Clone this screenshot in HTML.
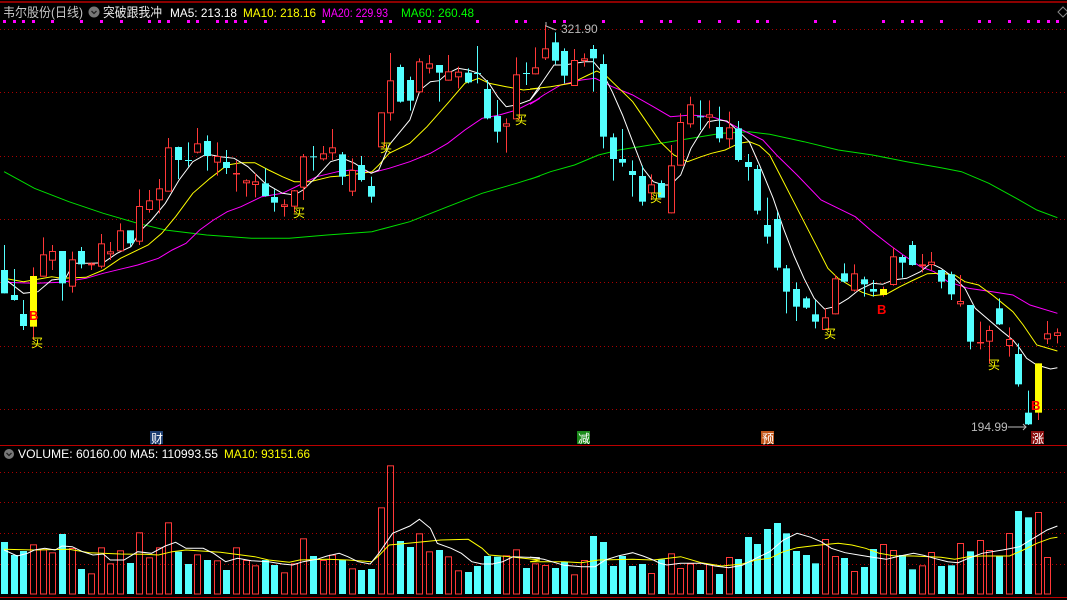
<!DOCTYPE html>
<html><head><meta charset="utf-8"><style>
html,body{margin:0;padding:0;background:#000;width:1067px;height:600px;overflow:hidden}
svg{display:block}
text{font-family:"Liberation Sans","Noto Sans CJK SC",sans-serif}
</style></head><body>
<svg id="s" width="1067" height="600" xmlns="http://www.w3.org/2000/svg">
<rect width="1067" height="600" fill="#000"/>
<line x1="0" y1="2" x2="1067" y2="2" stroke="#b00" stroke-width="1.5"/>
<g id="grid"></g>
<g id="lines"></g>
<g id="cand"></g>
<g id="vol"></g>
<line x1="0" y1="445.5" x2="1067" y2="445.5" stroke="#b00" stroke-width="1"/>
<line x1="0" y1="597.5" x2="1067" y2="597.5" stroke="#b00" stroke-width="1"/>
<text x="3" y="17" font-size="13" fill="#c8c8c8" textLength="80" lengthAdjust="spacingAndGlyphs">韦尔股份(日线)</text>
<circle cx="94" cy="12" r="5.5" fill="#777"/><path d="M91.5 11l2.5 2.5 2.5-2.5" stroke="#222" fill="none" stroke-width="1.3"/>
<text x="103" y="17" font-size="13" fill="#e8e8e8" textLength="59" lengthAdjust="spacingAndGlyphs">突破跟我冲</text>
<text x="170" y="17" font-size="12" fill="#fff" textLength="67" lengthAdjust="spacingAndGlyphs">MA5: 213.18</text>
<text x="243" y="17" font-size="12" fill="#ff0" textLength="73" lengthAdjust="spacingAndGlyphs">MA10: 218.16</text>
<text x="322" y="17" font-size="12" fill="#f0f" textLength="66" lengthAdjust="spacingAndGlyphs">MA20: 229.93</text>
<text x="401" y="17" font-size="12" fill="#0f0" textLength="73" lengthAdjust="spacingAndGlyphs">MA60: 260.48</text>
<path d="M1063 7l5 5-5 5-5-5z" fill="none" stroke="#888"/>
<circle cx="9" cy="454" r="5" fill="#777"/><path d="M6.5 453l2.5 2.5 2.5-2.5" stroke="#222" fill="none" stroke-width="1.3"/>
<text x="18" y="458" font-size="12" fill="#fff" textLength="200" lengthAdjust="spacingAndGlyphs">VOLUME: 60160.00  MA5: 110993.55</text>
<text x="224" y="458" font-size="12" fill="#ff0" textLength="86" lengthAdjust="spacingAndGlyphs">MA10: 93151.66</text>
<text x="561" y="33" font-size="12" fill="#bbb">321.90</text>
<path d="M546 22v4l10 4" stroke="#bbb" fill="none"/>
<text x="971" y="431" font-size="12" fill="#bbb">194.99</text>
<path d="M1008 427h18m-3-3l3 3-3 3" stroke="#bbb" fill="none"/>
<rect x="150" y="431" width="13" height="13" fill="#1c3d70"/><text x="151" y="443" font-size="12" fill="#fff">财</text>
<rect x="577" y="431" width="13" height="13" fill="#1a8a1a"/><text x="578" y="443" font-size="12" fill="#fff">减</text>
<rect x="761" y="431" width="13" height="13" fill="#c0561a"/><text x="762" y="443" font-size="12" fill="#fff">预</text>
<rect x="1031" y="431" width="13" height="13" fill="#8a1010"/><text x="1032" y="443" font-size="12" fill="#fff">涨</text>
<g id="lab"></g>
</svg>
<script>
var NS="http://www.w3.org/2000/svg";
function el(p,t,a){var e=document.createElementNS(NS,t);for(var k in a)e.setAttribute(k,a[k]);document.getElementById(p).appendChild(e);return e;}
[29,92,156,219,282,346,409,472,502,533,564].forEach(function(y){el("grid","line",{x1:0,x2:1067,y1:y+.5,y2:y+.5,stroke:"#a00","stroke-dasharray":"1 3"});});
[4,14,23,33,52,81,101,121,149,159,168,188,197,217,226,235,245,265,323,361,381,390,419,429,439,477,516,525,554,564,603,641,661,670,699,719,738,757,767,815,834,883,902,912,921,941,979,989,1009,1028,1038,1048,1057].forEach(function(x){el("grid","rect",{x:x-1,y:20,width:3,height:3,fill:"#f0f"});});
var X=function(i){return 4+9.66*i;};
var A=[["d",720,790,645,790],["d",795,810,717,812],["d",852,888,810,900],["B",738,890,712,930],["u",673,740,622,740],["u",663,692,645,720],["d",663,760,663,812],["u",688,770,665,788],["d",663,703,651,715],["u",700,706,697,720],["u",640,710,612,715],["u",664,673,636,690],["u",601,664,580,664],["d",601,640,601,650],["u",528,635,478,645],["u",511,540,480,548],["u",475,511,447,550],["u",352,485,324,485],["d",351,390,350,447],["d",390,392,337,410],["u",340,368,294,370],["d",333,378,316,422],["u",378,398,337,437],["d",396,414,360,432],["u",429,431,392,485],["u",451,460,448,500],["u",454,465,430,502],["d",460,498,415,500],["d",501,518,478,545],["u",523,531,508,560],["u",481,530,480,548],["u",379,473,372,510],["d",379,381,348,422],["u",370,388,348,392],["u",352,370,297,390],["d",373,440,366,465],["u",420,485,385,498],["d",405,450,378,455],["d",468,500,440,518],["u",247,352,247,352],["u",151,250,69,272],["d",111,215,104,218],["d",150,212,140,242],["u",94,187,85,187],["u",100,116,75,130],["d",105,128,105,215],["u",124,152,75,152],["u",125,142,110,175],["d",128,157,115,160],["d",129,131,48,160],["d",177,265,150,268],["d",258,305,210,338],["u",280,290,265,368],["u",133,268,82,268],["d",129,131,97,165],["u",112,133,52,133]];
var B=[["u",100,130,30,135],["d",82,137,52,148],["d",108,182,100,205],["u",135,213,102,213],["u",130,138,115,155],["d",102,130,90,230],["d",147,365,118,400],["d",367,432,355,497],["d",432,443,342,455],["d",468,480,436,545],["d",483,560,452,572],["u",508,535,478,555],["d",504,548,496,548],["u",451,595,390,595],["u",321,452,295,452],["u",268,328,245,338],["d",304,306,256,345],["u",298,308,256,340],["d",336,370,275,382],["u",337,373,290,398],["d",340,435,318,440],["d",441,456,417,497],["d",462,587,450,598],["d",630,665,548,686],["d",612,758,590,766],["d",760,830,750,895],["d",822,875,802,918],["d",850,878,845,882],["d",898,920,855,940],["u",907,945,880,945],["u",790,898,780,898],["d",775,800,745,803],["u",775,827,748,830],["d",793,808,785,845],["d",822,830,795,845],["Y",822,840,815,845],["u",724,810,698,812],["d",726,743,720,788],["d",690,750,678,752],["u",748,754,717,772],["u",740,750,711,765],["d",765,800,765,820],["d",778,838,770,855],["u",858,868,780,875],["d",870,980,870,1003],["u",981,983,920,1003],["u",945,980,932,1045],["d",880,928,850,930],["u",972,993,937,1025],["d",1017,1108,985,1115],["d",1193,1228,1127,1230],["B",1045,1193,1045,1215],["u",955,973,918,987],["u",952,963,940,985]];
var C=A.map(function(c){return [c[0],30+c[1]/3,30+c[2]/3,30+c[3]/3,30+c[4]/3];}).concat(B.map(function(c){return [c[0],15+c[1]/3,15+c[2]/3,15+c[3]/3,15+c[4]/3];}));
C.forEach(function(c,i){var x=Math.round(X(i));var col=c[0]=="d"?"#54ffff":"#ff3838";
 if(c[0]=="B"||c[0]=="Y"){el("cand","line",{x1:x+.5,x2:x+.5,y1:c[3],y2:c[4],stroke:"#ff3838"});el("cand","rect",{x:x-3,y:c[1],width:7,height:c[2]-c[1],fill:"#ff0"});return;}
 el("cand","line",{x1:x+.5,x2:x+.5,y1:c[3],y2:c[4],stroke:col});
 var h=Math.max(1,c[2]-c[1]);
 if(c[0]=="d")el("cand","rect",{x:x-3,y:c[1],width:7,height:h,fill:col});
 else {el("cand","rect",{x:x-2.5,y:c[1]+.5,width:6,height:Math.max(0.5,h-1),fill:"#000",stroke:col});}
});
function pts(a,z){var o=[];for(var i=0;i<a.length;i+=2){o.push(z?((530+a[i]/2.92).toFixed(1)+","+(15+a[i+1]/3).toFixed(1)):((a[i]/2.904).toFixed(1)+","+(30+a[i+1]/3).toFixed(1)));}return o.join(" ");}
function line(a,b,col){el("lines","polyline",{points:pts(a,0)+" "+pts(b,1),fill:"none",stroke:col,"stroke-width":1});}
line([12,425,100,475,200,515,300,550,400,580,480,600,600,615,730,625,840,625,950,615,1080,605,1190,575,1300,530,1400,490,1500,460,1568,438],[0,493,60,470,130,450,200,420,260,405,320,395,400,382,480,368,560,355,640,350,700,358,800,380,900,405,1000,420,1100,440,1200,458,1260,470,1340,505,1420,550,1480,585,1540,608],"#00e000");
line([12,757,100,760,180,757,250,745,300,730,360,715,400,705,460,685,500,660,540,640,580,600,620,570,660,545,700,530,760,500,820,490,870,465,920,440,980,425,1020,420,1080,428,1130,415,1190,395,1250,370,1300,340,1350,300,1400,265,1450,255,1500,240,1568,205],[0,268,40,240,90,210,150,195,190,190,240,215,300,240,360,275,410,305,470,300,530,305,570,318,620,345,680,375,720,420,780,480,850,555,900,580,950,605,1000,650,1050,690,1090,720,1140,755,1180,770,1220,800,1280,820,1350,830,1410,840,1460,870,1540,895],"#f0f");
line([12,745,68,755,110,748,150,740,180,745,250,742,300,720,350,685,430,645,470,610,510,560,560,490,610,445,660,405,700,398,740,398,780,420,820,440,855,455,900,455,960,440,1000,437,1050,430,1080,425,1100,405,1130,370,1190,340,1240,290,1300,220,1350,160,1390,145,1420,160,1470,170,1520,180,1568,175],[0,222,60,215,120,205,170,180,195,168,220,180,270,230,300,260,340,320,380,380,420,420,460,440,500,425,530,415,570,405,610,385,640,380,670,392,700,420,730,480,770,560,810,640,840,700,870,760,900,790,940,815,970,832,1000,842,1040,838,1080,815,1120,795,1160,776,1200,775,1240,780,1270,800,1310,810,1350,840,1380,865,1410,890,1440,930,1480,990,1540,1008],"#ff0");
line([12,745,68,790,110,785,150,750,190,745,215,700,265,700,300,698,340,670,380,650,410,600,440,570,480,520,520,450,560,395,600,372,640,380,680,385,720,410,770,460,820,490,855,495,880,480,920,440,960,395,995,385,1030,400,1060,420,1078,430,1100,420,1130,345,1190,270,1220,180,1250,155,1275,152,1300,130,1330,115,1360,120,1390,130,1420,160,1445,200,1470,230,1500,225,1540,210,1568,175],[0,255,30,210,70,150,100,150,160,140,185,140,210,170,240,230,270,300,300,380,330,460,360,500,390,510,410,510,440,480,470,400,500,350,520,320,550,315,575,318,610,350,640,380,670,450,710,550,740,640,770,720,800,790,830,850,860,882,890,875,930,850,960,825,1000,805,1030,808,1060,795,1100,790,1140,770,1170,745,1200,760,1240,790,1270,820,1300,880,1340,915,1380,950,1410,975,1430,1000,1450,1030,1480,1050,1520,1062,1540,1058],"#fff");
var V=[366,405,393,373,388,397,342,384,447,460,382,430,391,429,337,412,382,307,395,432,403,420,421,450,382,420,436,420,435,457,430,355,408,420,404,420,445,450,447,262,136,363,381,340,394,390,409,451,456,438,408,410,406,388,444,
430,435,444,425,463,420,348,366,438,408,438,432,459,418,400,444,430,450,432,462,411,417,351,372,327,309,340,393,405,430,357,408,414,453,441,387,372,390,405,448,436,396,438,436,369,394,360,390,408,339,273,292,276,411];
V.forEach(function(v,i){var x=Math.round(X(i));var y=420+v/3;var up=C[i][0]!="d";
 if(up)el("vol","rect",{x:x-2.5,y:y+.5,width:6,height:593.5-y,fill:"none",stroke:"#ff3838"});
 else el("vol","rect",{x:x-3,y:y,width:7,height:594-y,fill:"#54ffff"});});
function vp(a,z){var o=[];for(var i=0;i<a.length;i+=2){o.push(z?((530+a[i]/2.92).toFixed(1)+","+(420+a[i+1]/3).toFixed(1)):((a[i]/2.904).toFixed(1)+","+(420+a[i+1]/3).toFixed(1)));}return o.join(" ");}
function vl(a,b,col){el("vol","polyline",{points:vp(a,0)+" "+vp(b,1),fill:"none",stroke:col});}
vl([12,388,100,390,200,388,260,398,350,402,420,403,460,405,500,395,540,390,640,397,740,410,780,420,840,427,870,420,950,418,1010,420,1080,425,1100,407,1130,375,1200,368,1280,360,1360,358,1400,385,1420,405,1480,410,1568,420],[0,425,100,425,150,428,200,420,300,418,360,420,440,410,500,428,560,438,620,432,660,420,700,415,740,395,780,383,840,376,900,370,940,375,980,385,1020,400,1060,407,1120,408,1200,412,1240,418,1280,410,1320,408,1400,408,1440,390,1480,370,1520,355,1540,352],"#ff0");
vl([12,390,50,408,80,400,100,390,130,385,160,390,180,378,210,380,240,395,270,405,300,402,320,420,360,420,400,395,440,400,480,378,510,367,540,385,590,385,620,400,655,425,690,415,730,422,780,425,820,432,850,435,880,425,920,418,950,408,985,400,1010,410,1040,425,1075,432,1100,400,1140,340,1190,318,1218,298,1250,325,1270,370,1310,385,1340,400,1370,425,1400,432,1430,432,1460,425,1490,410,1568,413],[0,412,40,418,80,430,100,436,150,440,190,440,220,420,260,407,300,398,330,408,360,420,380,430,400,435,440,430,500,430,540,438,580,443,620,436,660,415,700,395,740,360,780,340,820,352,850,365,880,385,920,398,960,405,1000,412,1040,418,1080,408,1120,400,1150,406,1180,415,1220,425,1250,428,1280,415,1320,400,1380,390,1430,380,1470,355,1510,330,1540,318],"#fff");
[[31,347],[293,217],[380,152],[515,124],[650,202],[824,338],[988,369]].forEach(function(p){var t=el("lab","text",{x:p[0],y:p[1],"font-size":12,fill:"#ff0"});t.textContent="买";});
[[29,320],[877,314],[1031,410]].forEach(function(p){var t=el("lab","text",{x:p[0],y:p[1],"font-size":13,"font-weight":"bold",fill:"#f00"});t.textContent="B";});
</script>
</body></html>
